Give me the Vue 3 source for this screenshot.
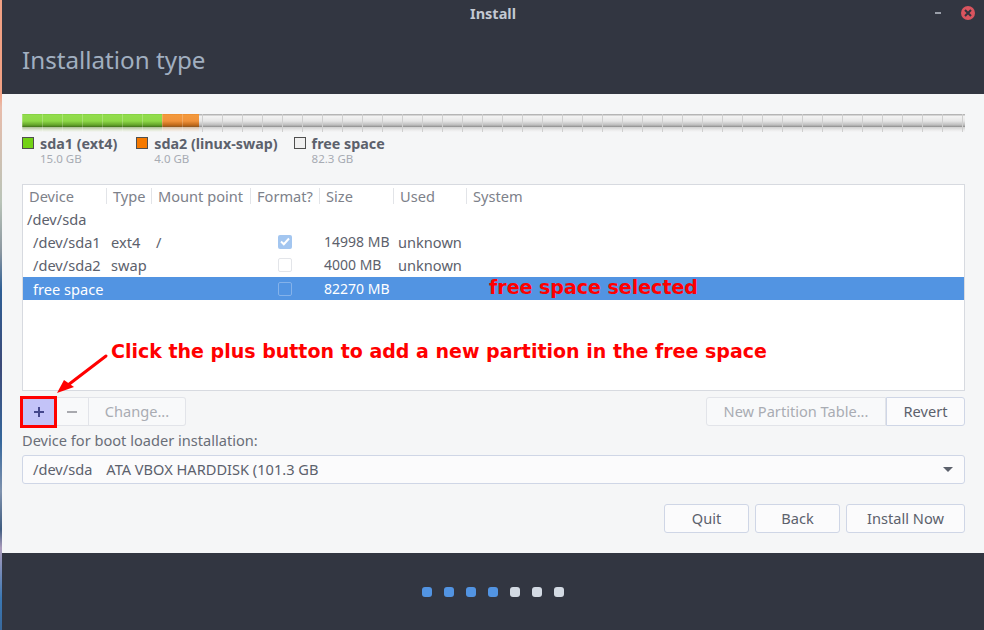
<script setup>
const legend = [
  { name: "sda1 (ext4)", size: "15.0 GB", cls: "swatch-green" },
  { name: "sda2 (linux-swap)", size: "4.0 GB", cls: "swatch-orange" },
  { name: "free space", size: "82.3 GB", cls: "swatch-free" },
];

const columns = ["Device", "Type", "Mount point", "Format?", "Size", "Used", "System"];

const rows = [
  { device: "/dev/sda", kind: "disk" },
  { device: "/dev/sda1", type: "ext4", mount: "/", format: "checked", size: "14998 MB", used: "unknown" },
  { device: "/dev/sda2", type: "swap", format: "empty", size: "4000 MB", used: "unknown" },
  { device: "free space", format: "empty", size: "82270 MB", selected: true },
];

const dots = [true, true, true, true, false, false, false];
</script>

<template>
  <div class="screen">
    <div class="wallpaper"></div>
    <div class="window">
      <header class="head">
        <div class="titlebar">
          <span class="title">Install</span>
          <span class="minimize"></span>
          <span class="close">
            <svg width="8" height="8" viewBox="0 0 8 8">
              <path d="M1 1 7 7M7 1 1 7" stroke="#2f343f" stroke-width="2" />
            </svg>
          </span>
        </div>
        <h1 class="page-title">Installation type</h1>
      </header>

      <main class="body">
        <div class="bar">
          <div class="seg seg-green"></div>
          <div class="seg seg-orange"></div>
          <div class="seg seg-free"></div>
        </div>

        <div class="legend">
          <div v-for="item in legend" :key="item.name" class="legend-item">
            <span class="swatch" :class="item.cls"></span>
            <div>
              <div class="legend-name">{{ item.name }}</div>
              <div class="legend-size">{{ item.size }}</div>
            </div>
          </div>
        </div>

        <div class="table">
          <div class="row head-row">
            <div v-for="col in columns" :key="col" class="head-cell">{{ col }}</div>
          </div>
          <div
            v-for="row in rows"
            :key="row.device"
            class="row"
            :class="{ selected: row.selected, disk: row.kind === 'disk' }"
          >
            <div class="cell device">{{ row.device }}</div>
            <div class="cell">{{ row.type }}</div>
            <div class="cell">{{ row.mount }}</div>
            <div class="cell check-cell">
              <span v-if="row.format" class="check" :class="row.format">
                <svg v-if="row.format === 'checked'" width="10" height="9" viewBox="0 0 10 9">
                  <path d="M1 4.5 3.8 7.2 9 1.5" fill="none" stroke="#fff" stroke-width="2" />
                </svg>
              </span>
            </div>
            <div class="cell size-cell">{{ row.size }}</div>
            <div class="cell">{{ row.used }}</div>
            <div class="cell"></div>
          </div>
        </div>

        <div class="toolbar">
          <div class="btn-group">
            <span class="tool tool-add">
              <svg width="12" height="12" viewBox="0 0 12 12">
                <path d="M6 1v10M1 6h10" stroke="#45478c" stroke-width="2" />
              </svg>
            </span>
            <span class="tool tool-remove">
              <svg width="12" height="12" viewBox="0 0 12 12">
                <path d="M1 6h10" stroke="#a8a9ae" stroke-width="2" />
              </svg>
            </span>
            <span class="tool tool-change">Change...</span>
          </div>
          <div class="btn-group">
            <span class="tool tool-table">New Partition Table...</span>
            <span class="btn-revert">Revert</span>
          </div>
        </div>

        <div class="boot-label">Device for boot loader installation:</div>
        <div class="combo">
          <span class="combo-dev">/dev/sda</span>
          <span>ATA VBOX HARDDISK (101.3 GB</span>
          <span class="combo-arrow"></span>
        </div>

        <div class="actions">
          <span class="btn btn-quit">Quit</span>
          <span class="btn btn-back">Back</span>
          <span class="btn btn-install">Install Now</span>
        </div>
      </main>

      <footer class="foot">
        <span v-for="(on, i) in dots" :key="i" class="dot" :class="{ on }"></span>
      </footer>
    </div>

    <!-- annotations drawn on top of the screenshot -->
    <div class="note note-selected">free space selected</div>
    <div class="note note-plus">Click the plus button to add a new partition in the free space</div>
    <div class="red-box"></div>
    <svg class="arrow" width="60" height="45" viewBox="0 0 60 45">
      <path d="M50 4 12 33" stroke="#f00" stroke-width="3" stroke-linecap="round" fill="none" />
      <path d="M1 41 8 28 18 35Z" fill="#f00" />
    </svg>
  </div>
</template>

<style scoped>
.screen {
  position: relative;
  display: flex;
  width: 984px;
  height: 630px;
  overflow: hidden;
  font-family: "Noto Sans", "Open Sans", sans-serif;
  font-size: 14.6px;
  color: #5c616c;
}

.wallpaper {
  width: 2px;
  flex: none;
  background: linear-gradient(180deg, #f2a184 0, #f2a184 15%, #e8bcab 17%, #b9c4b8 32%, #8a96a0 40%, #2e5f96 46%, #3c4a78 58%, #35679c 70%, #7f92ae 78%, #3f5c80 84%, #ab9cbc 87%, #3a78b4 95%, #39699c 100%);
}

.window {
  flex: 1;
  display: flex;
  flex-direction: column;
  min-width: 0;
}

.head {
  height: 94px;
  flex: none;
  background: #323641;
}

.titlebar {
  position: relative;
  height: 27px;
  display: flex;
  align-items: center;
  justify-content: center;
}

.title {
  font-size: 14.5px;
  font-weight: 700;
  color: #c3c8d2;
  margin-top: -1px;
}

.minimize {
  position: absolute;
  left: 933px;
  top: 12px;
  width: 6px;
  height: 2px;
  background: #9a9fa9;
}

.close {
  position: absolute;
  left: 959px;
  top: 6px;
  width: 14px;
  height: 14px;
  border-radius: 50%;
  background: #d9545e;
  display: flex;
  align-items: center;
  justify-content: center;
}

.page-title {
  margin: 0;
  padding: 17px 0 0 20px;
  font-size: 24.2px;
  line-height: 32px;
  font-weight: 400;
  color: #a1afc0;
}

.body {
  flex: 1;
  background: #f5f6f7;
  padding: 20px 19px 0 20px;
  display: flex;
  flex-direction: column;
  min-height: 0;
}

.bar {
  display: flex;
  height: 18px;
  flex: none;
}

.seg {
  height: 100%;
  background-repeat: repeat-x;
}

/* 20px ticks sit on top of the vertical shading, the last 5px fade out as a reflection */
.seg-green {
  width: 140px;
  background-image:
    linear-gradient(90deg, rgba(255, 255, 255, 0.22) 1px, transparent 1px),
    linear-gradient(180deg, #7cc83a 0, #92dd4d 1px, #8ed947 7px, #64a52a 11px, #3f6f1a 13px, #a9bd94 13px, #e3ead7 16px, #f5f6f7 18px);
  background-size: 20px 100%, 100% 100%;
}

.seg-orange {
  width: 37px;
  background-image:
    linear-gradient(90deg, rgba(255, 255, 255, 0.2) 1px, transparent 1px),
    linear-gradient(180deg, #e8872a 0, #f39a3d 1px, #f0923a 7px, #c26a1a 11px, #8a5520 13px, #d6bda4 13px, #f0e6da 16px, #f5f6f7 18px);
  background-size: 20px 100%, 100% 100%;
}

.seg-free {
  flex: 1;
  background-image:
    linear-gradient(90deg, #cfcfcf 1px, transparent 1px),
    linear-gradient(180deg, #b5b5b5 0, #b5b5b5 1px, #f4f4f4 2px, #e6e6e6 7px, #bdbdbd 11px, #8c8c8c 13px, #cfcfcf 13px, #ebebeb 16px, #f5f6f7 18px);
  background-size: 20px 100%, 100% 100%;
  background-position: 3px 0, 0 0;
}

.legend {
  display: flex;
  height: 52px;
  flex: none;
  padding-top: 4px;
  box-sizing: border-box;
}

.legend-item {
  display: flex;
  gap: 6px;
  margin-right: 16px;
}

.legend-item:first-child {
  margin-right: 19px;
}

.swatch {
  width: 10px;
  height: 10px;
  margin-top: 1px;
  border: 1px solid #4f4f4f;
}

.swatch-green {
  background: #73d216;
}

.swatch-orange {
  background: #f57900;
}

.swatch-free {
  background: #f0f0f0;
}

.legend-name {
  font-size: 14.3px;
  line-height: 16px;
  font-weight: 700;
  color: #5c616c;
  white-space: nowrap;
}

.legend-size {
  font-size: 11.5px;
  line-height: 13px;
  color: #a7abb3;
}

.table {
  height: 207px;
  flex: none;
  background: #fff;
  border: 1px solid #d7dae0;
  box-sizing: border-box;
}

.row {
  display: grid;
  grid-template-columns: 83px 45px 99px 69px 74px 73px 1fr;
  height: 23px;
  box-sizing: border-box;
  padding-bottom: 2px;
  align-items: center;
  white-space: nowrap;
}

.head-cell {
  padding-left: 6px;
  color: #7d818a;
  border-left: 1px solid #e2e4e8;
  line-height: 16px;
}

.head-cell:first-child {
  border-left: none;
}

.cell {
  padding-left: 5px;
}

.size-cell {
  font-size: 14px;
}

.device {
  padding-left: 10px;
}

.disk .device {
  padding-left: 4px;
}

.selected {
  background: #5294e2;
  color: #fff;
  padding-bottom: 0;
}

.check-cell {
  padding-left: 28px;
  display: flex;
}

.check {
  width: 14px;
  height: 14px;
  box-sizing: border-box;
  border-radius: 2px;
  display: flex;
  align-items: center;
  justify-content: center;
}

.check.checked {
  background: #a3c6f0;
}

.check.empty {
  border: 1px solid #e3e5e9;
  background: #fff;
}

.selected .check.empty {
  border-color: #84b2ea;
  background: #5294e2;
}

.toolbar {
  display: flex;
  justify-content: space-between;
  height: 29px;
  margin-top: 6px;
  flex: none;
}

.btn-group {
  display: flex;
}

.tool {
  height: 29px;
  box-sizing: border-box;
  display: flex;
  align-items: center;
  justify-content: center;
  background: #f8f9fa;
  border: 1px solid #e2e4e9;
  color: #a9acb3;
}

.tool-add {
  width: 34px;
  background: #c3c3f8;
  border-color: #c3c3f8;
}

.tool-remove {
  width: 33px;
  border-left: none;
}

.tool-change {
  width: 97px;
  padding-bottom: 2px;
  border-left: none;
  border-radius: 0 3px 3px 0;
}

.tool-table {
  width: 180px;
  padding-bottom: 2px;
  border-radius: 3px 0 0 3px;
}

.btn-revert {
  width: 79px;
  height: 29px;
  box-sizing: border-box;
  padding-bottom: 2px;
  display: flex;
  align-items: center;
  justify-content: center;
  background: #fbfbfc;
  border: 1px solid #cfd6e6;
  border-radius: 0 3px 3px 0;
}

.boot-label {
  height: 29px;
  line-height: 29px;
  flex: none;
  color: #6a6e77;
}

.combo {
  height: 29px;
  box-sizing: border-box;
  flex: none;
  display: flex;
  align-items: center;
  padding: 0 0 2px 10px;
  background: #fbfbfc;
  border: 1px solid #cfd6e6;
  border-radius: 3px;
  position: relative;
}

.combo-dev {
  margin-right: 14px;
}

.combo-arrow {
  position: absolute;
  right: 11px;
  top: 11px;
  border-left: 5px solid transparent;
  border-right: 5px solid transparent;
  border-top: 5px solid #5c616c;
}

.actions {
  display: flex;
  justify-content: flex-end;
  gap: 6px;
  margin-top: 20px;
}

.btn {
  height: 29px;
  box-sizing: border-box;
  padding-bottom: 2px;
  display: flex;
  align-items: center;
  justify-content: center;
  background: #fbfbfc;
  border: 1px solid #cfd6e6;
  border-radius: 3px;
}

.btn-quit,
.btn-back {
  width: 85px;
}

.btn-install {
  width: 119px;
}

.foot {
  height: 77px;
  flex: none;
  background: #323641;
  display: flex;
  align-items: center;
  justify-content: center;
  gap: 12px;
  padding-top: 1px;
  box-sizing: border-box;
}

.dot {
  width: 10px;
  height: 10px;
  border-radius: 3px;
  background: #d3dae3;
}

.dot.on {
  background: #5294e2;
}

.note {
  position: absolute;
  font-family: "DejaVu Sans", sans-serif;
  font-weight: 700;
  color: #f00;
  white-space: nowrap;
}

.note-selected {
  left: 489px;
  top: 276px;
  font-size: 19px;
  line-height: 22px;
}

.note-plus {
  left: 111px;
  top: 340px;
  font-size: 19px;
  line-height: 22px;
}

.red-box {
  position: absolute;
  left: 20px;
  top: 396px;
  width: 37px;
  height: 32px;
  box-sizing: border-box;
  border: 3px solid #f00;
}

.arrow {
  position: absolute;
  left: 56px;
  top: 352px;
}
</style>
